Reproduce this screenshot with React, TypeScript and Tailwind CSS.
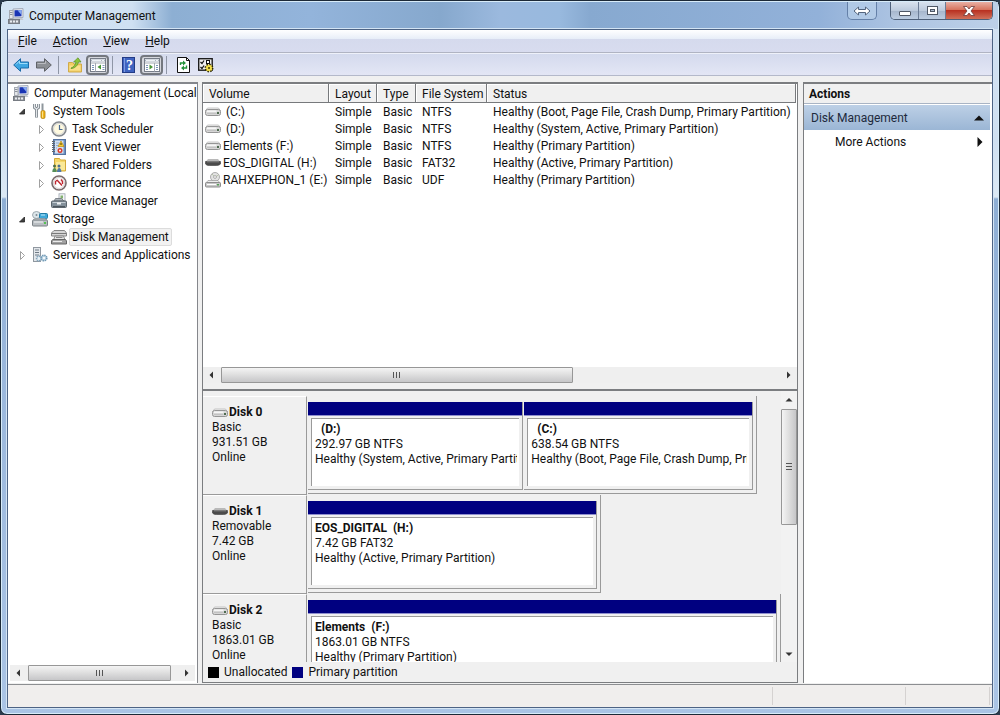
import React from 'react';

type IconProps = { children: React.ReactNode; w?: number; h?: number };

function Icon({ children, w = 16, h = 16 }: IconProps) {
  return (
    <svg width={w} height={h} viewBox={`0 0 ${w} ${h}`} className="shrink-0" aria-hidden="true">
      {children}
    </svg>
  );
}

const ComputerIcon = () => (
  <Icon>
    <path d="M5 1l10-0.500v9L5 10z" fill="#e6e9ef" stroke="#a4acba" />
    <path d="M6.500 2.300l7-0.300v6.300l-7 0.300z" fill="#1a35b4" />
    <path d="M9.500 2.200l4-0.200v5z" fill="#86aaf2" />
    <rect x="1.500" y="2.500" width="3.500" height="8" fill="#e3e6ea" stroke="#a6abb3" />
    <path d="M2 4.500h2.500M2 6.500h2.500" stroke="#8c929c" />
    <path d="M7 10h7l1.500 2h-9z" fill="#c4c9d1" />
    <rect x="0.500" y="11.500" width="11" height="4" fill="#8a8f96" stroke="#777c83" />
    <path d="M2 13.500h2M5 13.500h2M8 13.500h2" stroke="#e9ecef" strokeWidth="2" />
  </Icon>
);

const ToolsIcon = () => (
  <Icon>
    <path d="M2.500 1v3.500l2 1.500 2-1.500V1M4.500 6v8.500" fill="none" stroke="#7d858c" strokeWidth="3" />
    <path d="M2.500 1v3.500l2 1.500 2-1.500V1M4.500 6v8" fill="none" stroke="#e2e6e9" strokeWidth="1.300" />
    <path d="M10.500 0.500v7" stroke="#8e969c" strokeWidth="2" />
    <rect x="9" y="7.500" width="4" height="8" rx="1.500" fill="#f0b51c" stroke="#b37d08" strokeWidth="0.800" />
    <path d="M10.500 8.500v6" stroke="#fde28a" />
  </Icon>
);

const ClockIcon = () => (
  <Icon>
    <circle cx="8" cy="8" r="7" fill="#f4f1e4" stroke="#84888e" strokeWidth="1.600" />
    <circle cx="8" cy="8" r="5.500" fill="#fffae0" stroke="#c9ccd0" strokeWidth="0.800" />
    <path d="M8.500 4V8.500h3" fill="none" stroke="#4a6a93" strokeWidth="1.200" />
  </Icon>
);

const EventIcon = () => (
  <Icon>
    <rect x="2.500" y="0.500" width="12" height="15" fill="#6b8fc0" stroke="#5673a0" />
    <rect x="4" y="1.500" width="8.500" height="13" fill="#d3e1f3" />
    <path d="M5 4h3M5 6.500h2M5 9h1" stroke="#8fa9cc" />
    <path d="M1 2.500h3M1 4.500h3M1 6.500h3M1 8.500h3M1 10.500h3M1 12.500h3" stroke="#5f6670" />
    <path d="M10 2l3 5.500H7z" fill="#f8cf33" stroke="#b8891a" strokeWidth="0.700" />
    <path d="M10 4v2" stroke="#503c00" />
    <circle cx="9" cy="11.500" r="2.500" fill="#d83a2c" />
    <circle cx="9" cy="11.500" r="1" fill="#fff" />
  </Icon>
);

const SharedIcon = () => (
  <Icon>
    <path d="M3.500 1.500h5l1 1.500h5v11h-11z" fill="#f5d869" stroke="#d3aa3a" />
    <path d="M5 5h9v8H5z" fill="#fae998" />
    <circle cx="3.500" cy="9" r="1.500" fill="#4c6d49" />
    <circle cx="8" cy="9" r="1.500" fill="#4d6e91" />
    <path d="M1.300 15c0-5.500 4.400-5.500 4.400 0z" fill="#548d58" />
    <path d="M6 15c0-5.500 4.400-5.500 4.400 0z" fill="#4e78a8" />
  </Icon>
);

const PerfIcon = () => (
  <Icon>
    <circle cx="8" cy="8" r="7" fill="#fff" stroke="#7a6a6c" strokeWidth="1.600" />
    <circle cx="8" cy="8" r="5.500" fill="#fff" stroke="#d6d0d0" />
    <path d="M4.500 9.500V6.500l2-1.500M6 5l5 5.500M10 4.500l1.500 2v2.500" fill="none" stroke="#bf2630" strokeWidth="1.400" />
  </Icon>
);

const DeviceIcon = () => (
  <Icon>
    <rect x="8" y="0.800" width="6" height="7" fill="#f3f6f8" stroke="#9ba4ad" strokeWidth="0.800" />
    <rect x="9.500" y="2.500" width="2.500" height="3" fill="#82b06e" />
    <path d="M3 8l1.500-2.500h6L13 8z" fill="#a9b1b8" stroke="#697077" strokeWidth="0.800" />
    <rect x="0.500" y="8" width="15" height="6.500" rx="1" fill="#84919b" stroke="#5c666e" />
    <path d="M1.500 9.500h13" stroke="#c5ced4" />
    <path d="M6 10.500h4" stroke="#eef1f3" strokeWidth="2" />
    <path d="M2 13.500h12" stroke="#4c555c" />
  </Icon>
);

const StorageIcon = () => (
  <Icon>
    <ellipse cx="4.500" cy="4" rx="4" ry="3.500" fill="#dce6ea" stroke="#8a979e" strokeWidth="0.800" />
    <circle cx="4.500" cy="4" r="1" fill="#7d8a92" />
    <rect x="7.500" y="2.500" width="8" height="5" rx="1" fill="#3fa8d8" stroke="#1f7ba6" />
    <path d="M9 4h4" stroke="#bfe9fa" />
    <path d="M1 9l2-1.500h10l2 1.500z" fill="#e5e8ea" stroke="#8a9197" strokeWidth="0.700" />
    <rect x="0.500" y="9" width="15" height="6" rx="1" fill="#b9bec2" stroke="#7a8186" />
    <path d="M2 11h9" stroke="#f3f5f6" />
    <rect x="12" y="11" width="2" height="2" fill="#54c452" />
  </Icon>
);

const DiskMgmtIcon = () => (
  <Icon>
    <path d="M3 1.500h10.500l2 2.500v3h-15V4z" fill="#d6d6d6" stroke="#858585" />
    <path d="M1 4.500h14" stroke="#7a7a7a" />
    <path d="M4 7h8.500l1.500 4H2.500z" fill="#e6e6e6" stroke="#8a8a8a" />
    <path d="M5 8.500h6.500" stroke="#8a8a8a" />
    <path d="M1.500 10.500h13l1 1.500v3H0.500v-3z" fill="#a2a2a2" stroke="#666" />
    <path d="M2 12.500h9" stroke="#ececec" />
  </Icon>
);

const ServicesIcon = () => (
  <Icon>
    <rect x="1.500" y="0.500" width="7" height="14" fill="#e3e7eb" stroke="#9098a0" />
    <path d="M3 3h4M3 5.500h4M3 8h4" stroke="#6f7a86" />
    <circle cx="7" cy="11.500" r="2.400" fill="#e9f2f8" stroke="#86a5bb" strokeWidth="1.600" strokeDasharray="1.400 0.600" />
    <circle cx="12" cy="11" r="2.700" fill="#d5e7f2" stroke="#6f98b4" strokeWidth="1.800" strokeDasharray="1.400 0.700" />
    <circle cx="12" cy="11" r="0.900" fill="#fff" />
  </Icon>
);

const DriveIcon = () => (
  <Icon w={16} h={10}>
    <path d="M2.500 1h11l2 3H0.500z" fill="#f1f1f1" stroke="#b3b3b3" strokeWidth="0.700" />
    <rect x="0.500" y="2.500" width="15" height="6" rx="2" fill="#d6d6d6" stroke="#959595" />
    <path d="M2 4.200h9.500" stroke="#fafafa" strokeWidth="1.400" />
    <path d="M2 6.500h9.500" stroke="#c2c2c2" />
    <rect x="12" y="5" width="2" height="2" fill="#4f6b50" />
  </Icon>
);

const RemovableIcon = () => (
  <Icon w={16} h={10}>
    <path d="M3 1h10l2.500 3H0.500z" fill="#b9b9b9" />
    <path d="M0.500 3.500h15v2.500c-1 1-3 1.500-4 1.500h-7c-2 0-3-.5-4-1.500z" fill="#4b4b4b" stroke="#3c3c3c" strokeWidth="0.600" />
    <path d="M2 3.800h12" stroke="#8b8b8b" />
  </Icon>
);

const OpticalIcon = () => (
  <Icon>
    <circle cx="10" cy="5" r="4.500" fill="#e3e3e3" stroke="#9b9b9b" strokeWidth="0.800" />
    <path d="M10 5L7 2M10 5l3.500-2" stroke="#b9c4a9" />
    <circle cx="10" cy="5" r="1.400" fill="#fff" stroke="#8f8f8f" strokeWidth="0.700" />
    <path d="M3 8.500h10l2.500 3H0.500z" fill="#ededed" stroke="#9a9a9a" strokeWidth="0.700" />
    <rect x="0.500" y="10.500" width="15" height="4.500" rx="1" fill="#c8c8c8" stroke="#8d8d8d" />
    <path d="M2 12.500h9" stroke="#fff" />
    <rect x="12" y="12" width="2" height="1.500" fill="#55a055" />
  </Icon>
);

const driveIcons = { drive: DriveIcon, removable: RemovableIcon, optical: OpticalIcon };

type TreeRow = { label: string; level: string; icon: () => React.ReactElement; state?: 'open' | 'closed'; selected?: boolean };

const tree: TreeRow[] = [
  { label: 'System Tools', level: 'pl-[10px]', icon: ToolsIcon, state: 'open' },
  { label: 'Task Scheduler', level: 'pl-[29px]', icon: ClockIcon, state: 'closed' },
  { label: 'Event Viewer', level: 'pl-[29px]', icon: EventIcon, state: 'closed' },
  { label: 'Shared Folders', level: 'pl-[29px]', icon: SharedIcon, state: 'closed' },
  { label: 'Performance', level: 'pl-[29px]', icon: PerfIcon, state: 'closed' },
  { label: 'Device Manager', level: 'pl-[29px]', icon: DeviceIcon },
  { label: 'Storage', level: 'pl-[10px]', icon: StorageIcon, state: 'open' },
  { label: 'Disk Management', level: 'pl-[29px]', icon: DiskMgmtIcon, selected: true },
  { label: 'Services and Applications', level: 'pl-[10px]', icon: ServicesIcon, state: 'closed' },
];

function Expander({ state }: { state?: 'open' | 'closed' }) {
  return (
    <Icon w={10} h={10}>
      {state === 'open' && <path d="M6.500 3v5h-5z" fill="#404040" stroke="#222" strokeWidth="0.800" />}
      {state === 'closed' && <path d="M2.500 1.500L6.500 5.500 2.500 9.500z" fill="#fff" stroke="#a0a0a0" />}
    </Icon>
  );
}

function Arrow({ d }: { d: string }) {
  return (
    <Icon w={8} h={8}>
      <path d={d} fill="#333" />
    </Icon>
  );
}

const LEFT = 'M5 0.500v7L1.500 4z';
const RIGHT = 'M3 0.500v7L6.500 4z';
const UP = 'M0.500 5.500h7L4 2z';
const DOWN = 'M0.500 2.500h7L4 6z';

function HScroll({ thumb }: { thumb: string }) {
  return (
    <div className="flex h-4 shrink-0 items-stretch bg-[#efefef]">
      <button aria-label="Scroll left" className="flex w-[18px] shrink-0 items-center justify-center">
        <Arrow d={LEFT} />
      </button>
      <div className="flex flex-1">
        <div className={`${thumb} flex items-center justify-center gap-[2px] rounded-[1px] border border-[#979797] bg-linear-to-b from-[#f4f4f4] via-[#dedede] to-[#c6c6c8]`}>
          <i className="h-[6px] w-px bg-[#555]" />
          <i className="h-[6px] w-px bg-[#555]" />
          <i className="h-[6px] w-px bg-[#555]" />
        </div>
      </div>
      <button aria-label="Scroll right" className="flex w-[18px] shrink-0 items-center justify-center">
        <Arrow d={RIGHT} />
      </button>
    </div>
  );
}

const volumes = [
  { name: '\u00a0(C:)', icon: 'drive', fs: 'NTFS', status: 'Healthy (Boot, Page File, Crash Dump, Primary Partition)' },
  { name: '\u00a0(D:)', icon: 'drive', fs: 'NTFS', status: 'Healthy (System, Active, Primary Partition)' },
  { name: 'Elements (F:)', icon: 'drive', fs: 'NTFS', status: 'Healthy (Primary Partition)' },
  { name: 'EOS_DIGITAL (H:)', icon: 'removable', fs: 'FAT32', status: 'Healthy (Active, Primary Partition)' },
  { name: 'RAHXEPHON_1 (E:)', icon: 'optical', fs: 'UDF', status: 'Healthy (Primary Partition)' },
] as const;

const disks = [
  {
    name: 'Disk 0', icon: 'drive', kind: 'Basic', size: '931.51 GB', width: 'w-[95%]',
    parts: [
      { name: '\u00a0\u00a0(D:)', size: '292.97 GB NTFS', status: 'Healthy (System, Active, Primary Partition)', grow: 'grow-[216]' },
      { name: '\u00a0\u00a0(C:)', size: '638.54 GB NTFS', status: 'Healthy (Boot, Page File, Crash Dump, Primary Partition)', grow: 'grow-[230]' },
    ],
  },
  {
    name: 'Disk 1', icon: 'removable', kind: 'Removable', size: '7.42 GB', width: 'w-[62%]',
    parts: [{ name: 'EOS_DIGITAL\u00a0 (H:)', size: '7.42 GB FAT32', status: 'Healthy (Active, Primary Partition)', grow: 'grow' }],
  },
  {
    name: 'Disk 2', icon: 'drive', kind: 'Basic', size: '1863.01 GB', width: 'w-full',
    parts: [{ name: 'Elements\u00a0 (F:)', size: '1863.01 GB NTFS', status: 'Healthy (Primary Partition)', grow: 'grow' }],
  },
] as const;

function TitleBar() {
  const winBtn = 'flex items-center justify-center border-r border-[#6c7d96] bg-[linear-gradient(to_bottom,#d8e2ee_0,#bccadc_50%,#a5b5cb_51%,#bccde2_100%)]';
  return (
    <header className="-mx-[5px] mt-px flex h-[27px] shrink-0 items-start justify-between bg-[linear-gradient(to_right,#d3e4f4_0,#cfe0f2_130px,#8dafd3_170px,#93b4db_31%,#86a8cd_44%,#9bb9de_50%,#98b9de_56%,#87a9d0_59%,#92b1d9_82%,#adc4e2_90%,#bdd0e8_100%)] pr-[5px] pl-[6px]">
      <div className="flex h-[27px] items-center gap-[5px]">
        <ComputerIcon />
        <h1>Computer Management</h1>
      </div>
      <div className="flex h-[18px]">
        <button aria-label="Resize" className="mr-[13px] flex w-[30px] items-center justify-center rounded-b-[5px] border border-t-0 border-[#6480a8] bg-[#bdd3ec]/60">
          <Icon w={18} h={10}>
            <path d="M1 5l4.500-4v2.500h7V1L17 5l-4.500 4V6.500h-7V9z" fill="#fff" stroke="#53657e" />
          </Icon>
        </button>
        <div className="flex overflow-hidden rounded-b-[5px] border border-t-0 border-[#4e6079]">
          <button aria-label="Minimize" className={`${winBtn} w-[28px]`}>
            <Icon w={14} h={12}>
              <rect x="1.500" y="6.500" width="11" height="4" rx="0.500" fill="#fff" stroke="#4f5866" />
            </Icon>
          </button>
          <button aria-label="Maximize" className={`${winBtn} w-[27px]`}>
            <Icon w={13} h={12}>
              <rect x="1.500" y="1.500" width="10" height="8" fill="#fff" stroke="#4f5866" />
              <rect x="4.500" y="4.500" width="4" height="2" fill="#aebdd0" stroke="#4f5866" />
            </Icon>
          </button>
          <button aria-label="Close" className="flex w-[46px] items-center justify-center bg-[linear-gradient(to_bottom,#e9b0a4_0,#d5705a_48%,#b93222_50%,#d0705a_100%)]">
            <Icon w={14} h={12}>
              <path d="M1.500 1.500h3.500L7 4l2-2.500h3.500L9 6l3.500 4.500H9L7 8l-2 2.500H1.500L5 6z" fill="#fff" stroke="#6b3a3a" strokeWidth="0.800" />
            </Icon>
          </button>
        </div>
      </div>
    </header>
  );
}

function Toolbar() {
  const sep = 'ml-[3px] mr-[4px] h-[18px] w-px bg-[#8f96a6]';
  const btn = 'flex h-[22px] w-[23px] items-center justify-center';
  const pressed = 'flex h-[20px] w-[23px] items-center justify-center rounded-[4px] border-2 border-[#74787f] bg-[#d5d7dd]';
  return (
    <div className="flex h-[23px] shrink-0 items-center border-t border-b border-t-[#eef1f9] border-b-[#b4b9ca] bg-linear-to-b from-[#d4daed] to-[#e3e6f5] pl-px">
      <button aria-label="Back" className={btn}>
        <Icon>
          <path d="M0.700 8L7.500 1.700v3.300h8v6h-8v3.300z" fill="#3ea6e2" stroke="#1b6ba8" />
          <path d="M3 7.500L6.500 4v2.500h8" fill="none" stroke="#9cdcfa" />
        </Icon>
      </button>
      <button aria-label="Forward" className={btn}>
        <Icon>
          <path d="M15.300 8L8.500 1.700v3.300h-8v6h8v3.300z" fill="#8d9095" stroke="#5f6267" />
          <path d="M1.500 6.500h8V4" fill="none" stroke="#b9bbc0" />
        </Icon>
      </button>
      <span className={sep} />
      <button aria-label="Up one level" className={btn}>
        <Icon>
          <path d="M1.500 5.500h4l1.500 1.500h7.500v8h-13z" fill="#f2cd62" stroke="#d0ab4a" />
          <path d="M2.500 8.500h11v5h-11z" fill="#f9e08c" />
          <path d="M4 11c3-1 4-3 5-6H6.500L11 0.800 14 5h-2.500c-1 4-4 6.500-7.500 6.500z" fill="#8cc63c" stroke="#5d8f22" strokeWidth="0.700" />
        </Icon>
      </button>
      <button aria-label="Show or hide console tree" className={pressed}>
        <Icon>
          <rect x="0.500" y="1.500" width="15" height="13" fill="#fff" stroke="#777d88" />
          <path d="M1 3.500h14" stroke="#a9b2c0" strokeWidth="2" />
          <path d="M2 3.500h9M12 3.500h2" stroke="#f0f3f7" />
          <path d="M1 6h14M5.500 6v8.500" stroke="#a4aab4" />
          <path d="M2 8.500h2M2 10.500h2M2 12.500h2M12.500 8.500h2M12.500 10.500h2M12.500 12.500h2" stroke="#7a93b8" />
          <path d="M11 7.500v5L7.500 10z" fill="#489437" />
        </Icon>
      </button>
      <span className={sep} />
      <button aria-label="Help" className={btn}>
        <svg width="16" height="16" viewBox="0 0 16 16" aria-hidden="true">
          <rect x="1.500" y="0.500" width="12" height="15" fill="#3f63c0" stroke="#233c86" />
          <path d="M3.500 1v14" stroke="#7d9be0" />
          <text x="5" y="13" fontFamily="Liberation Serif, serif" fontSize="14" fontWeight="700" fill="#fff">?</text>
        </svg>
      </button>
      <button aria-label="Show or hide action pane" className={pressed}>
        <Icon>
          <rect x="0.500" y="1.500" width="15" height="13" fill="#fff" stroke="#777d88" />
          <path d="M1 3.500h14" stroke="#a9b2c0" strokeWidth="2" />
          <path d="M2 3.500h9M12 3.500h2" stroke="#f0f3f7" />
          <path d="M1 6h14M10.500 6v8.500" stroke="#a4aab4" />
          <path d="M2 8.500h2M2 10.500h2M2 12.500h2M12 8.500h2M12 10.500h2M12 12.500h2" stroke="#7a93b8" />
          <path d="M5.500 7.500v5L9 10z" fill="#489437" />
        </Icon>
      </button>
      <span className={sep} />
      <button aria-label="Refresh" className={btn}>
        <Icon>
          <path d="M2.500 0.500h9l3 3v12h-12z" fill="#fff" stroke="#111" />
          <path d="M11.500 0.500v3h3" fill="none" stroke="#111" />
          <path d="M5.500 8V6h3M11.500 8.500v2.500h-3" fill="none" stroke="#23923a" strokeWidth="1.400" />
          <path d="M8 3.500L11 6 8 8.500zM9 8.500L6 11l3 2.500z" fill="#23923a" />
        </Icon>
      </button>
      <button aria-label="Settings" className={btn}>
        <Icon>
          <rect x="0.700" y="1.700" width="13.500" height="11.500" fill="#efefef" stroke="#1e1e1e" strokeWidth="1.400" />
          <path d="M2.500 5l1.500 1.500L6 3.500M2.500 10l1.500 1.500L6 8.500" fill="none" stroke="#111" strokeWidth="1.200" />
          <rect x="8.500" y="3.500" width="3" height="3" fill="#fff" stroke="#111" />
          <circle cx="11" cy="11" r="3.600" fill="#f3df4a" stroke="#2b2600" strokeWidth="1.700" strokeDasharray="1.500 1.300" />
          <circle cx="11" cy="11" r="2.800" fill="#f3df4a" />
          <circle cx="11" cy="11" r="1" fill="#3d3600" />
        </Icon>
      </button>
    </div>
  );
}

function TreePane() {
  return (
    <nav aria-label="Console tree" className="flex w-[190px] shrink-0 flex-col overflow-hidden border-t-2 border-r border-[#85878c] bg-white">
      <ul className="flex-1 overflow-hidden whitespace-nowrap">
        <li className="flex h-[18px] items-center gap-[5px] pl-[5px]">
          <ComputerIcon />
          <span>Computer Management (Local</span>
        </li>
        {tree.map((row) => {
          const RowIcon = row.icon;
          return (
            <li key={row.label} className={`${row.level} flex h-[18px] items-center`}>
              <Expander state={row.state} />
              <span className="ml-[4px] mr-[2px] flex">
                <RowIcon />
              </span>
              <a href="#" className={row.selected ? 'h-[18px] rounded-[2px] border border-[#dcdcdc] bg-[#f2f2f2] px-[2px] leading-4' : 'px-[3px]'}>
                {row.label}
              </a>
            </li>
          );
        })}
      </ul>
      <div className="px-[2px] pb-[2px]">
        <HScroll thumb="w-[96%]" />
      </div>
    </nav>
  );
}

function VolumeList() {
  const th = 'h-[19px] border-r border-b border-[#77797c] bg-[#f0f0f0] p-0 pt-[2px] pl-[6px] text-left font-normal shadow-[inset_1px_1px_0_#fff]';
  return (
    <div className="flex h-[307px] shrink-0 flex-col bg-white">
      <div className="flex-1 overflow-hidden pr-px">
        <table className="w-full table-fixed border-separate border-spacing-0">
          <colgroup>
            <col className="w-[126px]" />
            <col className="w-[48px]" />
            <col className="w-[39px]" />
            <col className="w-[71px]" />
            <col />
          </colgroup>
          <thead>
            <tr>
              <th className={th}>Volume</th>
              <th className={th}>Layout</th>
              <th className={th}>Type</th>
              <th className={th}>File System</th>
              <th className={th}>Status</th>
            </tr>
          </thead>
          <tbody>
            {volumes.map((v) => {
              const VolumeIcon = driveIcons[v.icon];
              return (
                <tr key={v.name} className="h-[17px] whitespace-nowrap">
                  <td className="p-0">
                    <div className="flex h-[17px] items-center gap-[2px] pl-[2px]">
                      <VolumeIcon />
                      {v.name}
                    </div>
                  </td>
                  <td className="p-0 pl-[6px]">Simple</td>
                  <td className="p-0 pl-[6px]">Basic</td>
                  <td className="p-0 pl-[6px]">{v.fs}</td>
                  <td className="p-0 pl-[6px]">{v.status}</td>
                </tr>
              );
            })}
          </tbody>
        </table>
      </div>
      <HScroll thumb="w-[63%]" />
      <div className="h-[8px] shrink-0 border-b-2 border-[#7b7d80] bg-[#f0f0f0]" />
    </div>
  );
}

function DiskMap() {
  return (
    <div className="flex min-h-0 flex-1 bg-[#f0f0f0]">
      <div className="min-w-0 flex-1 overflow-hidden pt-[5px]">
        {disks.map((disk) => {
          const DiskIcon = driveIcons[disk.icon];
          return (
            <section key={disk.name} className="flex h-[99px]">
              <div className="w-[104px] shrink-0 border-t border-r border-b border-t-white border-r-[#9a9a9a] border-b-[#9a9a9a] pt-[8px] pl-[9px] leading-[15px]">
                <h2 className="flex items-center gap-px font-bold">
                  <DiskIcon />
                  {disk.name}
                </h2>
                <p>{disk.kind}</p>
                <p>{disk.size}</p>
                <p>Online</p>
              </div>
              <div className="min-w-0 flex-1 pl-px">
                <div className={`${disk.width} flex h-[98px] gap-px border-r border-b border-[#9a9a9a] pt-[6px] pr-[3px] pb-[3px]`}>
                  {disk.parts.map((p) => (
                    <article key={p.size} className={`${p.grow} flex min-w-0 basis-0 flex-col border-r border-b border-[#9a9a9a]`}>
                      <div className="h-[14px] shrink-0 border-b border-[#8f8fce] bg-[#000080]" />
                      <div className="mt-[2px] mr-[3px] mb-[3px] ml-[3px] flex-1 overflow-hidden border-t border-l border-[#9a9a9a] bg-white pt-[3px] pr-[2px] pl-[3px] leading-[15px] whitespace-nowrap">
                        <div className="overflow-hidden">
                          <h3 className="font-bold">{p.name}</h3>
                          <p>{p.size}</p>
                          <p>{p.status}</p>
                        </div>
                      </div>
                    </article>
                  ))}
                </div>
              </div>
            </section>
          );
        })}
      </div>
      <div className="flex w-[16px] shrink-0 flex-col bg-[#f2f2f2]">
        <button aria-label="Scroll up" className="flex h-[18px] items-center justify-center">
          <Arrow d={UP} />
        </button>
        <div className="flex-1">
          <div className="flex h-[49%] flex-col items-center justify-center gap-[2px] rounded-[1px] border border-[#979797] bg-linear-to-r from-[#f4f4f4] via-[#dedede] to-[#c6c6c8]">
            <i className="h-px w-[6px] bg-[#555]" />
            <i className="h-px w-[6px] bg-[#555]" />
            <i className="h-px w-[6px] bg-[#555]" />
          </div>
        </div>
        <button aria-label="Scroll down" className="flex h-[17px] items-center justify-center">
          <Arrow d={DOWN} />
        </button>
      </div>
    </div>
  );
}

export default function App() {
  return (
    <div className="h-screen min-h-[500px] w-full bg-[#2b3b4d] font-[Roboto,'Noto_Sans',sans-serif] text-[12px] leading-4 text-[#111]">
      <div className="flex h-full flex-col rounded-[7px] border border-[#1c2937] bg-[linear-gradient(to_bottom,#d3e2f2_0,#cfdff0_140px,#dce9f5_196px,#8eaed4_198px,#9ab7dc_50%,#aac4e5_100%)] px-[6px] pb-[6px] shadow-[inset_0_0_0_1px_#d8ecf9]">
        <TitleBar />
        <div className="flex min-h-0 flex-1 flex-col border border-[#4d6384] bg-[#f0f0f0] shadow-[0_0_0_1px_#d3e4f4]">
          <div className="flex h-[23px] shrink-0 items-center gap-[16px] border-b border-[#b0b4c2] bg-[linear-gradient(to_bottom,#ffffff_0,#e8eef8_40%,#d5daed_42%,#d8dcef_100%)] pl-[10px]">
            <button><u>F</u>ile</button>
            <button><u>A</u>ction</button>
            <button><u>V</u>iew</button>
            <button><u>H</u>elp</button>
          </div>
          <Toolbar />
          <div className="flex min-h-0 flex-1 pt-[6px]">
            <TreePane />
            <main className="ml-[4px] flex min-w-0 flex-1 flex-col border-t-2 border-r border-b border-l border-[#7b7d80]">
              <VolumeList />
              <DiskMap />
              <div className="flex h-[20px] shrink-0 items-center bg-[#f0f0f0] pl-[5px]">
                <span className="mr-[5px] size-[11px] bg-black" />
                Unallocated
                <span className="mr-[5px] ml-[5px] size-[11px] bg-[#000080]" />
                Primary partition
              </div>
            </main>
            <aside className="ml-[5px] flex w-[189px] shrink-0 flex-col border-t-2 border-l border-[#7b7d80] bg-white pr-[2px]">
              <h2 className="flex h-[20px] items-center border-b border-[#a9b4c4] bg-[#f0f0f0] pt-px pl-[5px] font-bold">Actions</h2>
              <button className="mt-px flex h-[25px] items-center justify-between bg-linear-to-b from-[#bdd0e6] to-[#9bb6d5] pr-[6px] pl-[7px] text-[#1e2a3c]">
                Disk Management
                <Icon w={10} h={6}><path d="M0 5.500h10L5 0.500z" fill="#111" /></Icon>
              </button>
              <button className="flex h-[23px] items-center justify-between pr-[7px] pl-[31px]">
                More Actions
                <Icon w={6} h={10}><path d="M0.500 0v10L5.500 5z" fill="#111" /></Icon>
              </button>
            </aside>
          </div>
          <footer className="mt-px flex h-[23px] shrink-0 justify-end border-t border-[#8c8e91] bg-[#f0eeed] py-[2px]">
            <span className="w-[133px] border-l border-[#d5d2d1]" />
            <span className="w-[85px] border-r border-l border-[#d5d2d1]" />
            <span className="w-[2px]" />
          </footer>
        </div>
      </div>
    </div>
  );
}
